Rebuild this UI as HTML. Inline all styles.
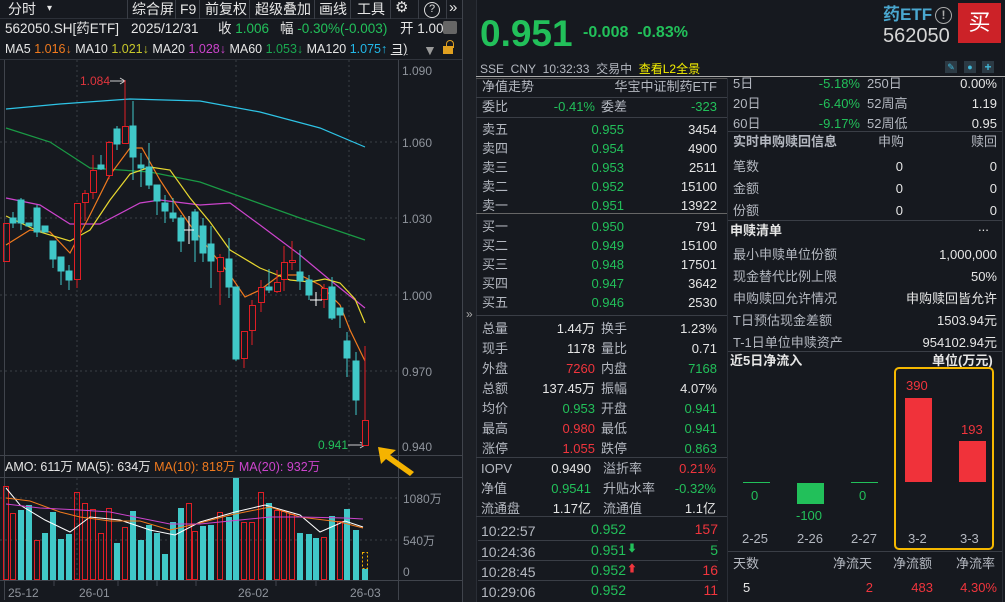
<!DOCTYPE html>
<html><head><meta charset="utf-8">
<style>
*{margin:0;padding:0;box-sizing:border-box}
body{width:1005px;height:602px;background:#16191f;overflow:hidden;position:relative;font-family:"Liberation Sans","Noto Sans CJK SC",sans-serif;font-size:13px;color:#b9bdc5}
.a{position:absolute;white-space:nowrap;line-height:16px}
.r{text-align:right}
.g{color:#22c05a}.rd{color:#f0353d}.w{color:#e6e6e6}.l{color:#b4b8c0}
.hl{position:absolute;height:1px;background:#3a3e46}
.vl{position:absolute;width:1px;background:#3a3e46}
</style></head><body>

<!-- toolbar -->
<div class="a" style="left:0;top:0;width:463px;height:19px;background:#16191f;border-bottom:1px solid #2c3038"></div>
<div class="a w" style="left:8px;top:1px;font-size:14px">分时</div>
<div class="a w" style="left:47px;top:1px;font-size:10px">▾</div>
<div class="vl" style="left:127px;top:0;height:19px"></div>
<div class="a w" style="left:132px;top:1px;font-size:14px">综合屏</div>
<div class="vl" style="left:175px;top:0;height:19px"></div>
<div class="a w" style="left:180px;top:1px;font-size:14px">F9</div>
<div class="vl" style="left:199px;top:0;height:19px"></div>
<div class="a w" style="left:205px;top:1px;font-size:14px">前复权</div>
<div class="vl" style="left:249px;top:0;height:19px"></div>
<div class="a w" style="left:255px;top:1px;font-size:14px">超级叠加</div>
<div class="vl" style="left:314px;top:0;height:19px"></div>
<div class="a w" style="left:319px;top:1px;font-size:14px">画线</div>
<div class="vl" style="left:350px;top:0;height:19px"></div>
<div class="a w" style="left:357px;top:1px;font-size:14px">工具</div>
<div class="vl" style="left:390px;top:0;height:19px"></div>
<div class="a w" style="left:395px;top:0px;font-size:15px">⚙</div>
<div class="vl" style="left:418px;top:0;height:19px"></div>
<div class="a" style="left:424px;top:2px;width:16px;height:16px;border:1.5px solid #ddd;border-radius:50%;font-size:11px;line-height:13px;text-align:center;color:#ddd">?</div>
<div class="vl" style="left:446px;top:0;height:19px"></div>
<div class="a w" style="left:449px;top:0px;font-size:15px">»</div>

<!-- info row -->
<div class="a w" style="left:5px;top:21px;font-size:13.5px">562050.SH[药ETF]</div>
<div class="a w" style="left:131px;top:21px;font-size:13.5px">2025/12/31</div>
<div class="a w" style="left:218px;top:21px;font-size:13.5px">收 <span class="g">1.006</span></div>
<div class="a w" style="left:280px;top:21px;font-size:13.5px">幅 <span class="g">-0.30%(-0.003)</span></div>
<div class="a w" style="left:400px;top:21px;font-size:13.5px">开 1.00</div>
<div class="a" style="left:443px;top:21px;width:14px;height:13px;background:#666;border-radius:2px"></div>
<!-- MA row -->
<div class="a w" style="left:5px;top:41px;font-size:12.5px">MA5 <span style="color:#f07a1e">1.016↓</span> MA10 <span style="color:#c8c82a">1.021↓</span> MA20 <span style="color:#cc44cc">1.028↓</span> MA60 <span style="color:#1aa850">1.053↓</span> MA120 <span style="color:#22b8e8">1.075↑</span> <u>ヨ)</u></div>
<div class="a" style="left:423px;top:42px;color:#999;font-size:14px">▼</div>
<div class="a" style="left:443px;top:46px;width:10px;height:8px;background:#e0a020"></div>
<div class="a" style="left:446px;top:40px;width:8px;height:8px;border:1.5px solid #e0a020;border-bottom:none;border-radius:4px 4px 0 0"></div>
<div class="hl" style="left:0;top:59px;width:463px;background:#30343c"></div>

<!-- main chart svg -->
<svg class="a" style="left:0;top:0" width="476" height="602">
 <g stroke="#3a3e46" stroke-dasharray="2,3" stroke-width="1">
  <line x1="0" y1="142" x2="398" y2="142"/><line x1="0" y1="218" x2="398" y2="218"/>
  <line x1="0" y1="295" x2="398" y2="295"/><line x1="0" y1="371" x2="398" y2="371"/>
  <line x1="77" y1="60" x2="77" y2="455"/><line x1="236" y1="60" x2="236" y2="455"/><line x1="349" y1="60" x2="349" y2="455"/>
  <line x1="0" y1="540" x2="398" y2="540"/><line x1="0" y1="498" x2="398" y2="498"/>
  <line x1="77" y1="478" x2="77" y2="580"/><line x1="236" y1="478" x2="236" y2="580"/><line x1="349" y1="478" x2="349" y2="580"/>
 </g>
 <line x1="398.5" y1="60" x2="398.5" y2="600" stroke="#40444c"/>
 <line x1="462.5" y1="0" x2="462.5" y2="602" stroke="#40444c"/>
 <line x1="0" y1="455.5" x2="463" y2="455.5" stroke="#40444c"/>
 <line x1="0" y1="477.5" x2="463" y2="477.5" stroke="#40444c"/>
 <line x1="0" y1="580.5" x2="463" y2="580.5" stroke="#40444c"/>
 <line x1="4.5" y1="60" x2="4.5" y2="600" stroke="#40444c"/>
 <rect x="463" y="0" width="13" height="602" fill="#1c1f25"/>
 <text x="466" y="318" fill="#aaa" font-size="12">»</text>
 <g font-size="12" fill="#8f949c" font-family="Liberation Sans">
  <text x="402" y="75">1.090</text><text x="402" y="147">1.060</text><text x="402" y="223">1.030</text>
  <text x="402" y="300">1.000</text><text x="402" y="376">0.970</text><text x="402" y="451">0.940</text>
  <text x="403" y="503">1080万</text><text x="403" y="545">540万</text><text x="403" y="576">0</text>
  <text x="8" y="597">25-12</text><text x="79" y="597">26-01</text><text x="238" y="597">26-02</text><text x="350" y="597">26-03</text>
 </g>
 <g stroke="#40444c"><line x1="54" y1="581" x2="54" y2="586"/><line x1="118" y1="581" x2="118" y2="586"/><line x1="157" y1="581" x2="157" y2="586"/><line x1="196" y1="581" x2="196" y2="586"/><line x1="276" y1="581" x2="276" y2="586"/><line x1="316" y1="581" x2="316" y2="586"/></g>
 <text x="80" y="85" fill="#e0353d" font-size="12">1.084</text>
 <line x1="110" y1="81" x2="124" y2="81" stroke="#ccc"/><path d="M120,78 L125,81 L120,84" fill="none" stroke="#ccc"/>
 <text x="318" y="449" fill="#22c05a" font-size="12">0.941</text>
 <line x1="348" y1="445" x2="364" y2="445" stroke="#ccc"/><path d="M360,442 L365,445 L360,448" fill="none" stroke="#ccc"/>
 <g fill="none" stroke-width="1.2">
  <polyline stroke="#2ec4e6" points="6,109 60,104 130,99 200,101 260,112 320,128 365,147"/>
  <polyline stroke="#1a9a45" points="6,128 50,142 90,168 150,172 200,182 250,200 300,218 365,240"/>
  <polyline stroke="#cc44cc" points="6,198 40,205 70,224 100,224 140,203 160,200 200,205 230,203 260,225 300,255 330,280 365,308"/>
  <polyline stroke="#f07a1e" points="6,245 30,230 50,232 70,253 90,215 110,175 130,148 142,148 160,180 175,203 190,225 210,250 230,275 245,297 260,290 280,275 300,275 320,285 340,305 350,330 365,361"/>
  <polyline stroke="#e8d830" points="6,216 40,232 70,241 90,230 110,200 130,174 150,167 170,170 190,198 210,222 230,250 260,268 290,280 310,282 325,279 340,283 355,299 365,323"/>
 </g>
 <g stroke-width="1">
 <g stroke="#40c8c8" fill="#40c8c8">
  <line x1="13" y1="212" x2="13" y2="228"/><rect x="10" y="218" width="6" height="5"/>
  <line x1="21" y1="198" x2="21" y2="230"/><rect x="18" y="200" width="6" height="23"/>
  <rect x="26" y="223" width="6" height="3"/>
  <line x1="37" y1="205" x2="37" y2="237"/><rect x="34" y="208" width="6" height="24"/>
  <rect x="42" y="226" width="6" height="6"/>
  <line x1="53" y1="241" x2="53" y2="268"/><rect x="50" y="241" width="6" height="18"/>
  <line x1="61" y1="257" x2="61" y2="285"/><rect x="58" y="257" width="6" height="14"/>
  <line x1="69" y1="265" x2="69" y2="290"/><rect x="66" y="271" width="6" height="9"/>
  <line x1="101" y1="155" x2="101" y2="170"/><rect x="98" y="165" width="6" height="4"/>
  <line x1="117" y1="126" x2="117" y2="150"/><rect x="114" y="129" width="6" height="15"/>
  <line x1="133" y1="101" x2="133" y2="180"/><rect x="130" y="126" width="6" height="31"/>
  <line x1="141" y1="153" x2="141" y2="187"/><rect x="138" y="165" width="6" height="3"/>
  <line x1="149" y1="143" x2="149" y2="189"/><rect x="146" y="167" width="6" height="18"/>
  <line x1="157" y1="185" x2="157" y2="215"/><rect x="154" y="185" width="6" height="16"/>
  <line x1="165" y1="195" x2="165" y2="223"/><rect x="162" y="203" width="6" height="8"/>
  <line x1="173" y1="198" x2="173" y2="222"/><rect x="170" y="213" width="6" height="5"/>
  <line x1="181" y1="215" x2="181" y2="252"/><rect x="178" y="218" width="6" height="23"/>
  <line x1="195" y1="209" x2="195" y2="262"/><rect x="192" y="212" width="6" height="28"/>
  <line x1="203" y1="218" x2="203" y2="262"/><rect x="200" y="226" width="6" height="27"/>
  <line x1="211" y1="226" x2="211" y2="288"/><rect x="208" y="244" width="6" height="17"/>
  <line x1="229" y1="238" x2="229" y2="298"/><rect x="226" y="259" width="6" height="28"/>
  <line x1="236" y1="287" x2="236" y2="361"/><rect x="233" y="287" width="6" height="72"/>
  <line x1="269" y1="269" x2="269" y2="293"/><rect x="266" y="287" width="6" height="3"/>
  <line x1="300" y1="250" x2="300" y2="290"/><rect x="297" y="272" width="6" height="9"/>
  <line x1="309" y1="275" x2="309" y2="300"/><rect x="306" y="280" width="6" height="15"/>
  <line x1="332" y1="277" x2="332" y2="320"/><rect x="329" y="287" width="6" height="31"/>
  <line x1="340" y1="308" x2="340" y2="328"/><rect x="337" y="308" width="6" height="7"/>
  <line x1="347" y1="332" x2="347" y2="377"/><rect x="344" y="341" width="6" height="17"/>
  <line x1="356" y1="352" x2="356" y2="415"/><rect x="353" y="361" width="6" height="39"/>
 </g>
 <g stroke="#e01e25" fill="none">
  <rect x="3.5" y="223.5" width="6" height="38"/>
  <line x1="77" y1="203" x2="77" y2="288"/><rect x="74.5" y="203.5" width="6" height="76" fill="#16191f"/>
  <line x1="85" y1="190" x2="85" y2="221"/><rect x="82.5" y="193.5" width="6" height="9" fill="#16191f"/>
  <line x1="93" y1="155" x2="93" y2="199"/><rect x="90.5" y="170.5" width="6" height="22" fill="#16191f"/>
  <line x1="109" y1="141" x2="109" y2="179"/><rect x="106.5" y="142.5" width="6" height="33" fill="#16191f"/>
  <line x1="125" y1="80" x2="125" y2="143"/><rect x="122.5" y="126.5" width="6" height="17" fill="#16191f"/>
  <line x1="220" y1="254" x2="220" y2="305"/><rect x="217.5" y="257.5" width="6" height="14" fill="#16191f"/>
  <line x1="244" y1="331" x2="244" y2="368"/><rect x="241.5" y="331.5" width="6" height="27" fill="#16191f"/>
  <line x1="252" y1="300" x2="252" y2="345"/><rect x="249.5" y="305.5" width="6" height="25" fill="#16191f"/>
  <line x1="261" y1="280" x2="261" y2="312"/><rect x="258.5" y="287.5" width="6" height="15" fill="#16191f"/>
  <line x1="277" y1="270" x2="277" y2="293"/><rect x="274.5" y="282.5" width="6" height="9" fill="#16191f"/>
  <line x1="284" y1="246" x2="284" y2="291"/><rect x="281.5" y="262.5" width="6" height="17" fill="#16191f"/>
  <line x1="292" y1="241" x2="292" y2="270"/><rect x="289.5" y="260.5" width="6" height="2" fill="#16191f"/>
  <line x1="324" y1="284" x2="324" y2="308"/><rect x="321.5" y="288.5" width="6" height="11" fill="#16191f"/>
  <line x1="365" y1="346" x2="365" y2="420"/><rect x="362.5" y="420.5" width="6" height="25" fill="#16191f"/>
 </g>
 <g stroke="#fff"><line x1="189" y1="216" x2="189" y2="244"/><line x1="184" y1="230" x2="194" y2="230"/><line x1="316" y1="292" x2="316" y2="306"/><line x1="310" y1="300" x2="322" y2="300"/></g>
 </g>
 <path d="M378,447 L396,450 L390,455 L414,472 L410,476 L386,459 L381,464 Z" fill="#f5b300"/>
 <text x="5" y="471" fill="#e6e6e6" font-size="12.5">AMO: 611万  MA(5): 634万  <tspan fill="#f07a1e">MA(10): 818万</tspan>  <tspan fill="#cc44cc">MA(20): 932万</tspan></text>
 <g fill="#40c8c8">
  <rect x="18" y="510" width="6" height="70"/><rect x="26" y="505" width="6" height="75"/><rect x="42" y="533" width="6" height="47"/><rect x="50" y="512" width="6" height="68"/><rect x="58" y="539" width="6" height="41"/><rect x="66" y="534" width="6" height="46"/>
  <rect x="114" y="543" width="6" height="37"/><rect x="130" y="511" width="6" height="69"/><rect x="138" y="540" width="6" height="40"/><rect x="146" y="525" width="6" height="55"/><rect x="154" y="533" width="6" height="47"/><rect x="162" y="554" width="6" height="26"/><rect x="170" y="522" width="6" height="58"/><rect x="178" y="508" width="6" height="72"/>
  <rect x="200" y="526" width="6" height="54"/><rect x="208" y="525" width="6" height="55"/><rect x="226" y="517" width="6" height="63"/><rect x="233" y="478" width="6" height="102"/><rect x="266" y="503" width="6" height="77"/>
  <rect x="297" y="533" width="6" height="47"/><rect x="306" y="534" width="6" height="46"/><rect x="313" y="538" width="6" height="42"/><rect x="329" y="516" width="6" height="64"/><rect x="344" y="509" width="6" height="71"/><rect x="353" y="530" width="6" height="50"/><rect x="362" y="569" width="6" height="11"/>
 </g>
 <g fill="none" stroke="#e01e25">
  <rect x="3.5" y="486.5" width="5" height="93"/><rect x="10.5" y="513.5" width="5" height="66"/><rect x="34.5" y="540.5" width="5" height="39"/><rect x="74.5" y="492.5" width="5" height="87"/><rect x="82.5" y="503.5" width="5" height="76"/><rect x="90.5" y="509.5" width="5" height="70"/><rect x="98.5" y="533.5" width="5" height="46"/><rect x="106.5" y="508.5" width="5" height="71"/><rect x="122.5" y="527.5" width="5" height="52"/>
  <rect x="186.5" y="503.5" width="5" height="76"/><rect x="192.5" y="531.5" width="5" height="48"/><rect x="217.5" y="512.5" width="5" height="67"/><rect x="241.5" y="522.5" width="5" height="57"/><rect x="249.5" y="522.5" width="5" height="57"/><rect x="258.5" y="492.5" width="5" height="87"/><rect x="274.5" y="510.5" width="5" height="69"/><rect x="281.5" y="511.5" width="5" height="68"/><rect x="289.5" y="514.5" width="5" height="65"/><rect x="321.5" y="537.5" width="5" height="42"/><rect x="337.5" y="521.5" width="5" height="58"/>
 </g>
 <rect x="362.5" y="552.5" width="5" height="16" fill="none" stroke="#f5b300" stroke-dasharray="2,2"/>
 <g fill="none" stroke-width="1">
  <polyline stroke="#fff" points="6,488 20,505 45,520 70,532 90,517 120,520 150,530 175,535 200,522 235,512 265,505 300,515 320,532 345,521 363,527"/>
  <polyline stroke="#f07a1e" points="6,498 30,501 60,512 80,517 110,521 140,521 170,530 200,523 230,515 270,507 300,517 340,522 363,528"/>
  <polyline stroke="#cc44cc" points="6,504 40,508 80,510 110,512 140,518 170,524 200,524 240,520 270,517 300,517 345,518 363,519"/>
 </g>
</svg>

<!-- middle panel -->
<div class="vl" style="left:476px;top:0;height:602px;background:#2a2e36"></div>
<div class="a g" style="left:480px;top:13px;font-size:37px;line-height:42px;font-weight:bold">0.951</div>
<div class="a g" style="left:583px;top:23px;font-size:16px;line-height:20px;font-weight:bold">-0.008&nbsp;&nbsp;-0.83%</div>
<div class="a l" style="left:480px;top:61px;font-size:12px">SSE&nbsp;&nbsp;CNY&nbsp;&nbsp;10:32:33&nbsp;&nbsp;交易中&nbsp;&nbsp;<span style="color:#f5f000">查看L2全景</span></div>
<div class="a" style="left:883px;top:5px;font-size:17px;color:#4aa8d0;font-weight:bold;line-height:20px">药ETF</div>
<div class="a" style="left:935px;top:7px;width:17px;height:17px;border:1.5px solid #aaa;border-radius:50%;color:#aaa;font-size:12px;line-height:14px;text-align:center;font-weight:bold">!</div>
<div class="a" style="left:883px;top:24px;font-size:20px;color:#d6d6d6;line-height:24px">562050</div>
<div class="a" style="left:958px;top:3px;width:43px;height:40px;background:#cc2228;color:#fff;font-size:22px;line-height:40px;text-align:center">买</div>
<div class="a" style="left:945px;top:61px;width:12px;height:12px;background:#2c3a44;color:#40b8d8;font-size:9px;line-height:12px;text-align:center">✎</div>
<div class="a" style="left:964px;top:61px;width:12px;height:12px;background:#2c3a44;color:#40b8d8;font-size:9px;line-height:12px;text-align:center">●</div>
<div class="a" style="left:982px;top:61px;width:12px;height:12px;background:#2c3a44;color:#40b8d8;font-size:12px;line-height:12px;text-align:center;font-weight:bold">+</div>
<div class="hl" style="left:476px;top:76px;width:529px;background:#aaa"></div>
<div class="hl" style="left:476px;top:78px;width:252px;background:#555"></div>

<div class="a l" style="left:482px;top:79px">净值走势</div><div class="a l r" style="left:600px;top:79px;width:117px">华宝中证制药ETF</div>
<div class="hl" style="left:476px;top:97px;width:252px"></div>
<div class="a l" style="left:482px;top:99px">委比</div><div class="a g r" style="left:540px;top:99px;width:55px">-0.41%</div><div class="a l" style="left:601px;top:99px">委差</div><div class="a g r" style="left:650px;top:99px;width:67px">-323</div>
<div class="hl" style="left:476px;top:117px;width:252px"></div>

<div class="a l" style="left:482px;top:120px;line-height:19px">卖五<br>卖四<br>卖三<br>卖二<br>卖一</div>
<div class="a g r" style="left:560px;top:120px;width:64px;line-height:19px">0.955<br>0.954<br>0.953<br>0.952<br>0.951</div>
<div class="a w r" style="left:640px;top:120px;width:77px;line-height:19px">3454<br>4900<br>2511<br>15100<br>13922</div>
<div class="hl" style="left:476px;top:213px;width:252px;background:#666"></div>
<div class="a l" style="left:482px;top:217px;line-height:19px">买一<br>买二<br>买三<br>买四<br>买五</div>
<div class="a g r" style="left:560px;top:217px;width:64px;line-height:19px">0.950<br>0.949<br>0.948<br>0.947<br>0.946</div>
<div class="a w r" style="left:640px;top:217px;width:77px;line-height:19px">791<br>15100<br>17501<br>3642<br>2530</div>
<div class="hl" style="left:476px;top:315px;width:252px"></div>

<div class="a l" style="left:482px;top:319px;line-height:20px">总量<br>现手<br>外盘<br>总额<br>均价<br>最高<br>涨停</div>
<div class="a r" style="left:520px;top:319px;width:75px;line-height:20px"><span class="w">1.44万</span><br><span class="w">1178</span><br><span class="rd">7260</span><br><span class="w">137.45万</span><br><span class="g">0.953</span><br><span class="rd">0.980</span><br><span class="rd">1.055</span></div>
<div class="a l" style="left:601px;top:319px;line-height:20px">换手<br>量比<br>内盘<br>振幅<br>开盘<br>最低<br>跌停</div>
<div class="a r" style="left:640px;top:319px;width:77px;line-height:20px"><span class="w">1.23%</span><br><span class="w">0.71</span><br><span class="g">7168</span><br><span class="w">4.07%</span><br><span class="g">0.941</span><br><span class="g">0.941</span><br><span class="g">0.863</span></div>
<div class="hl" style="left:476px;top:457px;width:252px"></div>
<div class="a l" style="left:481px;top:459px;line-height:20px">IOPV<br>净值<br>流通盘</div>
<div class="a r" style="left:520px;top:459px;width:71px;line-height:20px"><span class="w">0.9490</span><br><span class="g">0.9541</span><br><span class="w">1.17亿</span></div>
<div class="a l" style="left:603px;top:459px;line-height:20px">溢折率<br>升贴水率<br>流通值</div>
<div class="a r" style="left:640px;top:459px;width:76px;line-height:20px"><span class="rd">0.21%</span><br><span class="g">-0.32%</span><br><span class="w">1.1亿</span></div>
<div class="hl" style="left:476px;top:516px;width:252px"></div>

<div class="a l" style="left:481px;top:521px;font-size:14px;line-height:20px">10:22:57</div><div class="a g r" style="left:560px;top:521px;width:66px;font-size:14px">0.952</div><div class="a rd r" style="left:680px;top:521px;width:38px;font-size:14px">157</div>
<div class="hl" style="left:478px;top:540px;width:240px"></div>
<div class="a l" style="left:481px;top:542px;font-size:14px;line-height:20px">10:24:36</div><div class="a g r" style="left:560px;top:542px;width:66px;font-size:14px">0.951</div><div class="a g" style="left:627px;top:542px;font-size:10px">⬇</div><div class="a g r" style="left:680px;top:542px;width:38px;font-size:14px">5</div>
<div class="hl" style="left:478px;top:560px;width:240px"></div>
<div class="a l" style="left:481px;top:562px;font-size:14px;line-height:20px">10:28:45</div><div class="a g r" style="left:560px;top:562px;width:66px;font-size:14px">0.952</div><div class="a rd" style="left:627px;top:562px;font-size:10px">⬆</div><div class="a rd r" style="left:680px;top:562px;width:38px;font-size:14px">16</div>
<div class="hl" style="left:478px;top:580px;width:240px"></div>
<div class="a l" style="left:481px;top:582px;font-size:14px;line-height:20px">10:29:06</div><div class="a g r" style="left:560px;top:582px;width:66px;font-size:14px">0.952</div><div class="a rd r" style="left:680px;top:582px;width:38px;font-size:14px">11</div>

<!-- right panel -->
<div class="vl" style="left:727px;top:78px;height:524px;background:#2a2e36"></div>
<div class="vl" style="left:1002px;top:78px;height:524px;background:#2a2e36"></div>
<div class="a l" style="left:733px;top:74px;line-height:20px">5日<br>20日<br>60日</div>
<div class="a g r" style="left:790px;top:74px;width:70px;line-height:20px">-5.18%<br>-6.40%<br>-9.17%</div>
<div class="a l" style="left:867px;top:74px;line-height:20px">250日<br>52周高<br>52周低</div>
<div class="a w r" style="left:930px;top:74px;width:67px;line-height:20px">0.00%<br>1.19<br>0.95</div>
<div class="hl" style="left:728px;top:131px;width:274px"></div>
<div class="a l" style="left:733px;top:134px;font-weight:bold">实时申购赎回信息</div>
<div class="a l" style="left:878px;top:134px">申购</div><div class="a l" style="left:971px;top:134px">赎回</div>
<div class="a l" style="left:733px;top:156px;line-height:22px">笔数<br>金额<br>份额</div>
<div class="a w r" style="left:870px;top:156px;width:33px;line-height:22px">0<br>0<br>0</div>
<div class="a w r" style="left:960px;top:156px;width:37px;line-height:22px">0<br>0<br>0</div>
<div class="hl" style="left:728px;top:220px;width:274px"></div>
<div class="a w" style="left:730px;top:223px;font-weight:bold">申赎清单</div><div class="a w" style="left:978px;top:219px">...</div>
<div class="a l" style="left:733px;top:244px;line-height:22px">最小申赎单位份额<br>现金替代比例上限<br>申购赎回允许情况<br>T日预估现金差额<br>T-1日单位申赎资产</div>
<div class="a w r" style="left:880px;top:244px;width:117px;line-height:22px">1,000,000<br>50%<br>申购赎回皆允许<br>1503.94元<br>954102.94元</div>
<div class="hl" style="left:728px;top:351px;width:274px"></div>
<div class="a w" style="left:730px;top:353px;font-weight:bold">近5日净流入</div><div class="a w" style="left:932px;top:353px;font-weight:bold">单位(万元)</div>

<div class="a" style="left:743px;top:482px;width:27px;height:1px;background:#22c05a"></div>
<div class="a g" style="left:751px;top:488px">0</div>
<div class="a" style="left:797px;top:483px;width:27px;height:21px;background:#22c05a"></div>
<div class="a g" style="left:796px;top:508px">-100</div>
<div class="a" style="left:851px;top:482px;width:27px;height:1px;background:#22c05a"></div>
<div class="a g" style="left:859px;top:488px">0</div>
<div class="a" style="left:905px;top:398px;width:27px;height:84px;background:#f0323a"></div>
<div class="a rd" style="left:906px;top:378px">390</div>
<div class="a" style="left:959px;top:441px;width:27px;height:41px;background:#f0323a"></div>
<div class="a rd" style="left:961px;top:422px">193</div>
<div class="a l" style="left:742px;top:531px;width:200px;font-size:13px"><span style="position:absolute;left:0">2-25</span><span style="position:absolute;left:55px">2-26</span><span style="position:absolute;left:109px">2-27</span><span style="position:absolute;left:166px">3-2</span><span style="position:absolute;left:218px">3-3</span></div>
<div class="a" style="left:894px;top:367px;width:100px;height:183px;border:2px solid #f5b800;border-radius:5px"></div>
<div class="hl" style="left:728px;top:551px;width:274px"></div>
<div class="a l" style="left:733px;top:556px">天数</div><div class="a l" style="left:833px;top:556px">净流天</div><div class="a l" style="left:893px;top:556px">净流额</div><div class="a l" style="left:956px;top:556px">净流率</div>
<div class="a w" style="left:743px;top:580px">5</div><div class="a rd r" style="left:840px;top:580px;width:33px">2</div><div class="a rd r" style="left:890px;top:580px;width:43px">483</div><div class="a rd r" style="left:940px;top:580px;width:57px">4.30%</div>
</body></html>
